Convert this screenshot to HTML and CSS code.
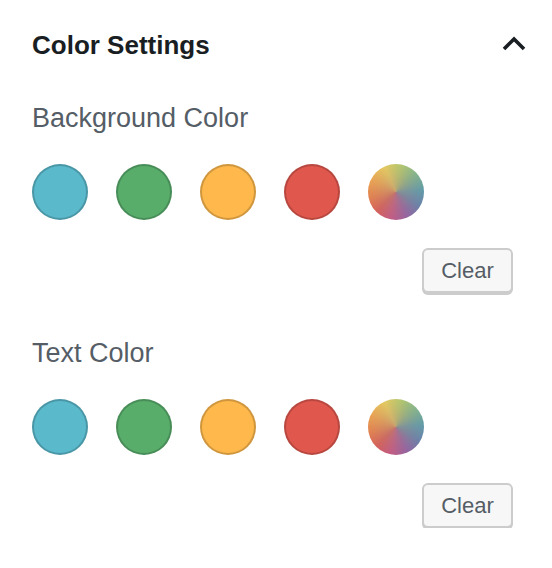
FILE: index.html
```html
<!DOCTYPE html>
<html lang="en">
<head>
    <meta charset="UTF-8">
    <title>Color Settings</title>
    <link rel="stylesheet" href="styles.css">
</head>
<body>

    <div class="panel">
        <div class="panel-header">
            <h2 class="panel-title">Color Settings</h2>
            <svg class="chevron" width="24" height="16" viewBox="0 0 24 16">
                <path d="M2 13 L12 3 L22 13" fill="none" stroke="#191e23" stroke-width="3.6"/>
            </svg>
        </div>

        <div class="color-section">
            <div class="section-label">Background Color</div>
            <div class="swatches">
                <span class="swatch swatch-blue"></span>
                <span class="swatch swatch-green"></span>
                <span class="swatch swatch-yellow"></span>
                <span class="swatch swatch-red"></span>
                <span class="swatch swatch-custom"></span>
            </div>
            <div class="btn-row">
                <button class="btn">Clear</button>
            </div>
        </div>

        <div class="color-section">
            <div class="section-label">Text Color</div>
            <div class="swatches">
                <span class="swatch swatch-blue"></span>
                <span class="swatch swatch-green"></span>
                <span class="swatch swatch-yellow"></span>
                <span class="swatch swatch-red"></span>
                <span class="swatch swatch-custom"></span>
            </div>
            <div class="btn-row">
                <button class="btn">Clear</button>
            </div>
        </div>
    </div>

</body>
</html>
```

FILE: styles.css
```css
body {
    margin: 0;
    padding: 0;
    background-color: #fff;
    font-family: "Liberation Sans", Arial, sans-serif;
}

.panel {
    padding: 29px 39px 0 32px;
}

.panel-header {
    display: flex;
    justify-content: space-between;
    align-items: center;
    margin-right: -13px;
}

.panel-title {
    margin: 0;
    font-size: 26px;
    line-height: 32px;
    font-weight: bold;
    color: #191e23;
}

.chevron {
    margin-top: -2px;
}

.color-section {
    margin-top: 41px;
}

.color-section + .color-section {
    margin-top: 44px;
}

.section-label {
    font-size: 27px;
    line-height: 32px;
    color: #555d66;
}

.swatches {
    display: flex;
    gap: 28px;
    margin-top: 30px;
}

.swatch {
    display: block;
    width: 52px;
    height: 52px;
    border-radius: 50%;
    border: 2px solid rgba(0, 0, 0, 0.18);
}

.swatch-blue {
    background-color: #5ab9cb;
}

.swatch-green {
    background-color: #58ad6b;
}

.swatch-yellow {
    background-color: #feb84b;
}

.swatch-red {
    background-color: #e0574d;
}

.swatch-custom {
    border: none;
    width: 56px;
    height: 56px;
    background:
        radial-gradient(circle, rgba(175, 135, 125, 0.55) 0%, rgba(175, 135, 125, 0.2) 45%, rgba(175, 135, 125, 0) 75%),
        conic-gradient(from 10deg, #b4c96e 0deg, #86b78a 35deg, #5f9dab 75deg, #6882ab 110deg,
        #9263a2 145deg, #c25a85 180deg, #d5605a 215deg, #e4834f 250deg,
        #eba452 285deg, #e6cb60 325deg, #b4c96e 360deg);
}

.btn-row {
    display: flex;
    justify-content: flex-end;
    margin-top: 28px;
}

.btn {
    width: 91px;
    height: 45px;
    padding: 0;
    font-family: "Liberation Sans", Arial, sans-serif;
    font-size: 22px;
    color: #555d66;
    background-color: #f7f7f7;
    border: 2px solid #ccc;
    border-radius: 6px;
    box-shadow: 0 2px 0 #ccc;
    cursor: pointer;
}
```
